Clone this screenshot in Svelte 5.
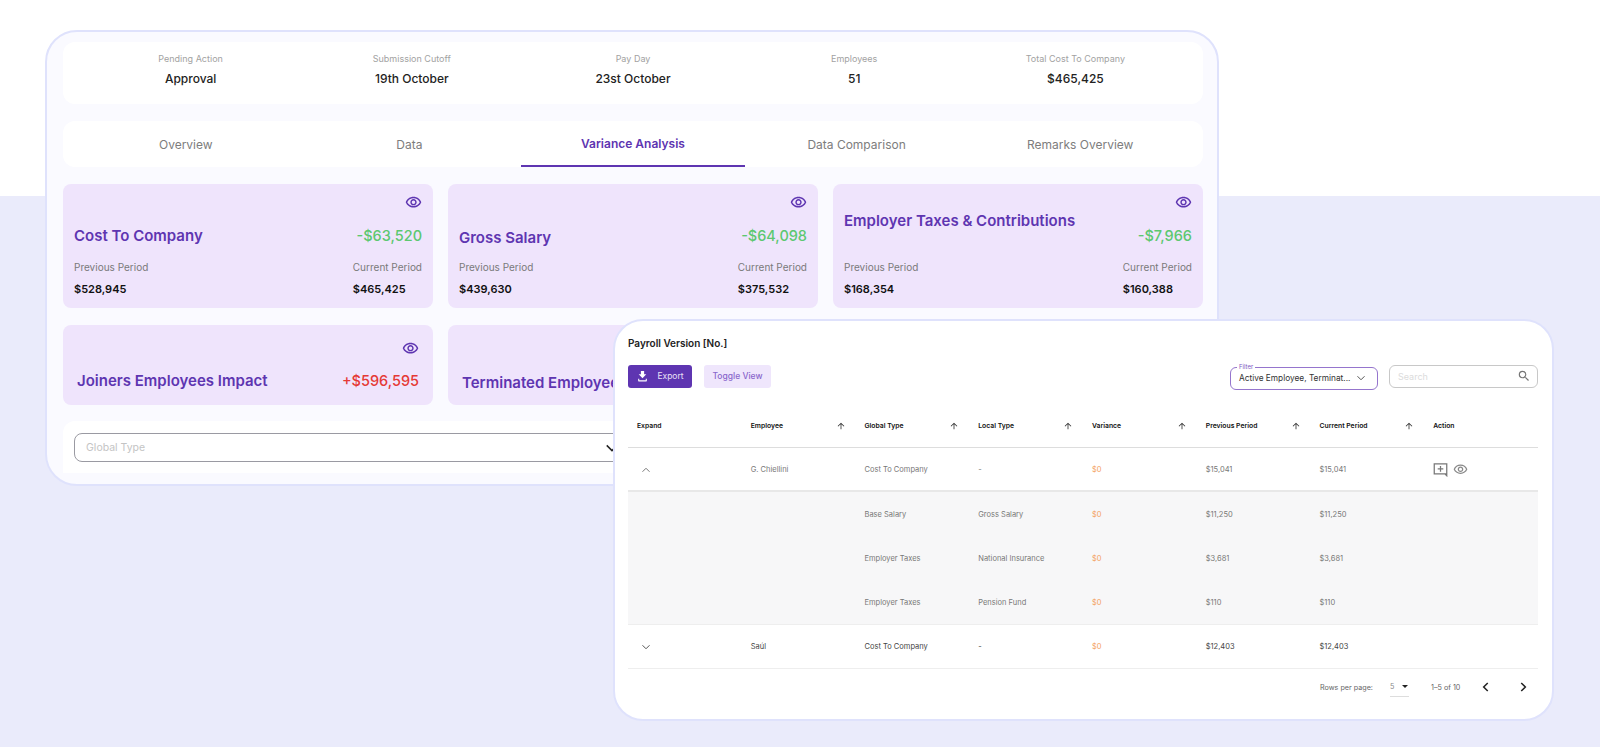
<script>
  const summary = [
    ['Pending Action', 'Approval'],
    ['Submission Cutoff', '19th October'],
    ['Pay Day', '23st October'],
    ['Employees', '51'],
    ['Total Cost To Company', '$465,425']
  ];
  const tabs = ['Overview', 'Data', 'Variance Analysis', 'Data Comparison', 'Remarks Overview'];
  const cards = [
    { t: 'Cost To Company', v: '-$63,520', p: '$528,945', c: '$465,425', k: '' },
    { t: 'Gross Salary', v: '-$64,098', p: '$439,630', c: '$375,532', k: 'low' },
    { t: 'Employer Taxes & Contributions', v: '-$7,966', p: '$168,354', c: '$160,388', k: 'stack' }
  ];
  const heads = ['Expand', 'Employee', 'Global Type', 'Local Type', 'Variance', 'Previous Period', 'Current Period', 'Action'];
  const subs = [
    ['Base Salary', 'Gross Salary', '$11,250'],
    ['Employer Taxes', 'National Insurance', '$3,681'],
    ['Employer Taxes', 'Pension Fund', '$110']
  ];
  const eye = 'M12 6a9.77 9.77 0 0 1 8.82 5.5C19.17 14.87 15.79 17 12 17s-7.17-2.13-8.82-5.5A9.77 9.77 0 0 1 12 6m0-2C7 4 2.73 7.11 1 11.5 2.73 15.89 7 19 12 19s9.27-3.11 11-7.5C21.27 7.11 17 4 12 4zm0 5a2.5 2.5 0 0 1 0 5 2.5 2.5 0 0 1 0-5m0-2c-2.48 0-4.5 2.02-4.5 4.5S9.52 16 12 16s4.5-2.02 4.5-4.5S14.48 7 12 7z';
</script>

<div class="page">
  <section class="panel">
    <div class="summary">
      {#each summary as s}
        <div class="sum"><span class="sl">{s[0]}</span><span class="sv">{s[1]}</span></div>
      {/each}
    </div>
    <div class="tabs">
      {#each tabs as t, i}
        <div class="tab" class:active={i === 2}>{t}</div>
      {/each}
    </div>
    <div class="cards">
      {#each cards as c}
        <div class="card">
          <div class="eye"><svg viewBox="0 0 24 24" width="17" height="17"><path d={eye} /></svg></div>
          <div class="head {c.k}">
            <span class="title">{c.t}</span>
            <span class="val green">{c.v}</span>
          </div>
          <div class="meta">
            <div><div class="ml">Previous Period</div><div class="mv">{c.p}</div></div>
            <div class="cur"><div class="ml">Current Period</div><div class="mv">{c.c}</div></div>
          </div>
        </div>
      {/each}
      <div class="card short">
        <div class="eye"><svg viewBox="0 0 24 24" width="17" height="17"><path d={eye} /></svg></div>
        <div class="head">
          <span class="title">Joiners Employees Impact</span>
          <span class="val red">+$596,595</span>
        </div>
      </div>
      <div class="card short">
        <div class="eye"><svg viewBox="0 0 24 24" width="17" height="17"><path d={eye} /></svg></div>
        <div class="head low">
          <span class="title">Terminated Employees Impact</span>
        </div>
      </div>
    </div>
    <div class="filterbar">
      <div class="select">
        <span>Global Type</span>
        <svg viewBox="0 0 24 24" width="18" height="18"><path d="M5 8.5l7 7 7-7" fill="none" stroke="#222" stroke-width="2" /></svg>
      </div>
    </div>
  </section>

  <section class="win">
    <div class="wtitle">Payroll Version [No.]</div>
    <div class="toolbar">
      <button class="export">
        <svg viewBox="0 0 24 24" width="13" height="13"><path d="M19 8h-4V2H9v6H5l7 7 7-7z" fill="#fff" /><path d="M4 16v4a1 1 0 0 0 1 1h14a1 1 0 0 0 1-1v-4h-2v3H6v-3z" fill="#fff" /></svg>
        <span>Export</span>
      </button>
      <button class="toggle">Toggle View</button>
      <div class="spacer"></div>
      <div class="fbox">
        <span class="flabel">Filter</span>
        <span class="ftext">Active Employee, Terminat...</span>
        <svg viewBox="0 0 24 24" width="12" height="12"><path d="M5 8.5l7 7 7-7" fill="none" stroke="#555" stroke-width="2" /></svg>
      </div>
      <div class="search">
        <span>Search</span>
        <svg viewBox="0 0 24 24" width="14" height="14"><path fill="#757575" d="M15.5 14h-.79l-.28-.27A6.47 6.47 0 0 0 16 9.5 6.5 6.5 0 1 0 9.5 16c1.61 0 3.09-.59 4.23-1.57l.27.28v.79l5 4.99L20.49 19l-4.99-5zm-6 0C7.01 14 5 11.99 5 9.5S7.01 5 9.5 5 14 7.01 14 9.5 11.99 14 9.5 14z" /></svg>
      </div>
    </div>

    <div class="row thead">
      {#each heads as h, i}
        <div class="cell">
          <span>{h}</span>
          {#if i > 0 && i < 7}
            <svg class="arrow" viewBox="0 0 24 24" width="10" height="10"><path fill="#333" d="M4 12l1.41 1.41L11 7.83V20h2V7.83l5.58 5.59L20 12l-8-8-8 8z" /></svg>
          {/if}
        </div>
      {/each}
    </div>

    <div class="row first dim">
      <div class="cell"><svg class="chev" viewBox="0 0 24 24" width="12" height="12"><path d="M5 15.5l7-7 7 7" fill="none" stroke="#777" stroke-width="2" /></svg></div>
      <div class="cell">G. Chiellini</div>
      <div class="cell">Cost To Company</div>
      <div class="cell">-</div>
      <div class="cell orange">$0</div>
      <div class="cell">$15,041</div>
      <div class="cell">$15,041</div>
      <div class="cell icons">
        <svg viewBox="0 0 24 24" width="15" height="15"><path d="M2 3h20v16H2z M19 19l3 3v-3" fill="none" stroke="#777" stroke-width="2" /><path d="M12 6.5v9M7.5 11h9" stroke="#777" stroke-width="2" /></svg>
        <svg viewBox="0 0 24 24" width="15" height="15"><path fill="#888" d={eye} /></svg>
      </div>
    </div>

    <div class="subs">
      {#each subs as s}
        <div class="row sub dim">
          <div class="cell"></div>
          <div class="cell"></div>
          <div class="cell">{s[0]}</div>
          <div class="cell">{s[1]}</div>
          <div class="cell orange">$0</div>
          <div class="cell">{s[2]}</div>
          <div class="cell">{s[2]}</div>
          <div class="cell"></div>
        </div>
      {/each}
    </div>

    <div class="row last">
      <div class="cell"><svg class="chev" viewBox="0 0 24 24" width="12" height="12"><path d="M5 8.5l7 7 7-7" fill="none" stroke="#555" stroke-width="2" /></svg></div>
      <div class="cell">Saúl</div>
      <div class="cell">Cost To Company</div>
      <div class="cell">-</div>
      <div class="cell orange">$0</div>
      <div class="cell">$12,403</div>
      <div class="cell">$12,403</div>
      <div class="cell"></div>
    </div>

    <div class="pager">
      <span class="rows">Rows per page:</span>
      <span class="pp">5 <i class="caret"></i></span>
      <span class="range">1–5 of 10</span>
      <svg viewBox="0 0 24 24" width="14" height="14"><path d="M15 5l-7 7 7 7" fill="none" stroke="#222" stroke-width="2.6" /></svg>
      <svg class="nx" viewBox="0 0 24 24" width="14" height="14"><path d="M9 5l7 7-7 7" fill="none" stroke="#222" stroke-width="2.6" /></svg>
    </div>
  </section>
</div>

<style>
  :global(body) { margin: 0; background: #fff; }
  .page {
    position: relative; height: 747px; overflow: hidden; box-sizing: border-box; padding: 30px 0 0 45px;
    background: linear-gradient(#fff 196px, #eaebfb 196px);
    font-family: Inter, "Open Sans", sans-serif;
  }
  .panel {
    box-sizing: border-box; width: 1174px; height: 456px; padding: 10px 14px 0 16px;
    background: #fafaff; border: 2px solid #dfe2fc; border-radius: 32px;
  }
  .summary {
    display: grid; grid-template-columns: repeat(5, 1fr); height: 62px; padding: 0 17px 7px; box-sizing: border-box;
    background: #fff; border-radius: 12px; align-items: center;
  }
  .sum { display: flex; flex-direction: column; align-items: center; gap: 6px; }
  .sl { font-size: 9px; color: #a2a2a2; line-height: 12px; }
  .sv { font-size: 12px; font-weight: 500; color: #222; line-height: 15px; }
  .tabs {
    display: grid; grid-template-columns: repeat(5, 1fr); height: 46px; margin-top: 17px; padding: 0 11px;
    background: #fff; border-radius: 12px;
  }
  .tab { display: flex; align-items: center; justify-content: center; font-size: 12px; color: #7d7d7d; box-sizing: border-box; }
  .tab.active { color: #5e35b1; font-weight: 600; border-bottom: 2px solid #5e35b1; }
  .cards { display: grid; grid-template-columns: repeat(3, 1fr); gap: 17px 15px; margin-top: 17px; }
  .card {
    box-sizing: border-box; height: 124px; padding: 0 11px; background: #efe4fc; border-radius: 8px;
    display: flex; flex-direction: column;
  }
  .eye { display: flex; justify-content: flex-end; padding-top: 10px; height: 17px; }
  .eye path { fill: #5e35b1; }
  .head { display: flex; justify-content: space-between; align-items: center; height: 20px; margin-top: 15px; }
  .head.stack { flex-direction: column; align-items: stretch; height: 35px; margin-top: 0; }
  .head.stack .val { align-self: flex-end; margin-top: -5px; }
  .head.low .title { position: relative; top: 2px; }
  .title { font-size: 15px; font-weight: 600; color: #5e35b1; line-height: 20px; white-space: nowrap; }
  .val { font-size: 14.5px; font-weight: 500; line-height: 20px; }
  .green { color: #5cc870; }
  .red { color: #e53935; }
  .meta { display: flex; justify-content: space-between; margin-top: 14px; }
  .ml { font-size: 10px; color: #7a7a7a; line-height: 14px; }
  .mv { font-size: 11px; font-weight: 600; color: #111; line-height: 16px; margin-top: 7px; }
  .card.short { height: 80px; padding: 0 14px; }
  .card.short .eye { padding-top: 15px; }
  .card.short .head { margin-top: 14px; }
  .filterbar {
    height: 52px; margin-top: 16px; padding: 12px 11px 0; box-sizing: border-box; background: #fff; border-radius: 12px 12px 0 0;
  }
  .select {
    display: flex; justify-content: space-between; align-items: center; box-sizing: border-box; height: 29px; padding: 0 575px 0 11px;
    border: 1px solid #9a9aa2; border-radius: 8px; font-size: 10.5px; color: #c4c4c4;
  }
  .select svg { margin-right: -5px; }

  .win {
    position: absolute; left: 613px; top: 319px; width: 941px; height: 402px; box-sizing: border-box;
    padding: 0 14px 0 13px; background: #fff; border: 2px solid #dfe2fc; border-radius: 30px;
  }
  .wtitle { margin-top: 15px; font-size: 10px; font-weight: 600; color: #222; line-height: 14px; }
  .toolbar { display: flex; align-items: center; margin-top: 14px; height: 24px; gap: 12px; }
  .toolbar button { height: 23px; border: 0; border-radius: 3px; font: inherit; font-size: 8.5px; padding: 0; display: flex; align-items: center; justify-content: center; }
  .export { width: 64px; gap: 8px; background: #5e35b1; color: #e8e0f6; }
  .toggle { width: 67px; background: #efe6fc; color: #8a68cc; font-weight: 500 !important; }
  .spacer { flex: 1; }
  .fbox {
    position: relative; box-sizing: border-box; width: 148px; height: 23px; margin-top: 4px; padding: 0 10px 0 8px; display: flex; justify-content: space-between; align-items: center;
    border: 1px solid #9575cd; border-radius: 6px;
  }
  .flabel { position: absolute; left: 6px; top: -5px; padding: 0 2px; background: #fff; font-size: 6px; line-height: 7px; color: #7e57c2; }
  .ftext { font-size: 8.3px; color: #333; white-space: nowrap; }
  .search {
    box-sizing: border-box; width: 149px; height: 23px; padding: 0 6px 0 8px; margin-left: -1px; display: flex; justify-content: space-between; align-items: center;
    border: 1px solid #c8c8c8; border-radius: 6px; font-size: 9px; color: #dcdcdc;
  }
  .row { display: grid; grid-template-columns: repeat(8, 1fr); align-items: center; height: 44px; box-sizing: border-box; font-size: 7.5px; color: #444; }
  .cell { display: flex; align-items: center; justify-content: space-between; padding: 0 10px 0 9px; white-space: nowrap; }
  .thead { margin-top: 16px; height: 44px; font-size: 6.8px; font-weight: 600; color: #111; border-bottom: 1px solid #ddd; }
  .first { height: 44px; padding-top: 1px; border-bottom: 2px solid #e8e8e8; }
  .dim { color: #777; }
  .subs { background: #f7f7f8; }
  .sub { height: 44px; }
  .last { height: 45px; border-top: 1px solid #eee; border-bottom: 1px solid #eee; }
  .orange { color: #f4a261; }
  .chev { margin-left: 3px; }
  .icons { justify-content: flex-start; gap: 5px; }
  .pager { display: flex; align-items: center; height: 36px; font-size: 7.2px; color: #666; }
  .rows { margin-left: 692px; width: 70px; }
  .pp { position: relative; width: 41px; color: #888; line-height: 16px; }
  .pp::after { content: ''; position: absolute; left: 0; bottom: -2px; width: 19px; height: 1px; background: #ddd; }
  .caret { position: absolute; left: 12px; top: 6px; border: 3px solid transparent; border-top: 3px solid #222; }
  .range { width: 48px; }
  .nx { margin-left: 23px; }
</style>
